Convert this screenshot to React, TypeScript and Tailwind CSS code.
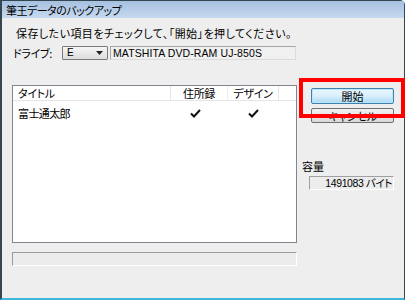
import React from "react";

const Check = () => (
  <svg width="11" height="9" viewBox="0 0 11 9" className="block">
    <path d="M1 4.5 L4 7.5 L10 1" fill="none" stroke="#111" strokeWidth="2" />
  </svg>
);

export default function App() {
  return (
    <div className="relative w-[407px] h-[300px] bg-white font-['Noto_Sans_CJK_JP','Liberation_Sans',sans-serif] text-black [font-feature-settings:'palt'] overflow-hidden">
      <div className="w-[405px] h-[300px] flex flex-col bg-[#eeeeee] border-l-2 border-t border-r border-[#34464f] border-b-2 border-b-[#3db5dc] rounded-tr-[5px]">
        {/* title bar */}
        <div className="h-[17px] shrink-0 flex items-center pl-[4px] bg-gradient-to-b from-[#a6c0e0] to-[#c6d9ef] text-[11px] leading-[12px] tracking-[-0.5px]">
          筆王データのバックアップ
        </div>
        <div className="flex flex-1">
          {/* left column */}
          <div className="pl-[10px] w-[295px] flex flex-col">
            <div className="mt-[9px] ml-[4px] h-[12px] leading-[12px] text-[11px] tracking-[0.45px] whitespace-nowrap">
              保存したい項目をチェックして、「開始」を押してください。
            </div>
            <div className="mt-[7px] h-[14px] flex items-center">
              <div className="w-[50px] pl-[1px] text-[11px] leading-[12px] tracking-[-0.3px]">ドライブ:</div>
              <div className="w-[46px] h-[14px] border border-[#7a7a7a] rounded-[1px] bg-gradient-to-b from-[#f6f6f6] to-[#dcdcdc] flex items-center justify-between pl-[4px] pr-[4px]">
                <span className="text-[10px] leading-[10px] font-['Liberation_Sans',sans-serif]">E</span>
                <svg width="7" height="4" viewBox="0 0 7 4" className="block">
                  <path d="M0 0 H7 L3.5 4 Z" fill="#222" />
                </svg>
              </div>
              <div className="ml-[2px] w-[186px] h-[14px] border border-[#a5a5a5] border-b-[#dcdcdc] border-r-[#dcdcdc] bg-[#f0f0f0] flex items-center pl-[2px]">
                <span className="text-[10.5px] leading-[10px] font-['Liberation_Sans',sans-serif] tracking-[0.1px] whitespace-nowrap">MATSHITA DVD-RAM UJ-850S</span>
              </div>
            </div>
            {/* list */}
            <div className="mt-[25px] h-[158px] border border-[#7f868e] bg-white flex flex-col">
              <div className="h-[15px] flex border-b border-[#e5e5e5] text-[11px] leading-[12px]">
                <div className="w-[158px] pl-[5px] flex items-center border-r border-[#e5e5e5] tracking-[-0.3px]">タイトル</div>
                <div className="w-[57px] flex items-center justify-center border-r border-[#ececec] tracking-[-0.3px]">住所録</div>
                <div className="w-[51px] flex items-center justify-center border-r border-[#e5e5e5] tracking-[-0.3px]">デザイン</div>
                <div className="flex-1" />
              </div>
              <div className="h-[14px] mt-[5px] flex items-center text-[11px] leading-[12px]">
                <div className="w-[158px] pl-[5px] tracking-[-0.6px]">富士通太郎</div>
                <div className="w-[57px] flex justify-center pr-[8px]"><Check /></div>
                <div className="w-[51px] flex justify-center"><Check /></div>
              </div>
            </div>
            {/* progress */}
            <div className="mt-[9px] h-[14px] border border-[#9a9a9a] border-b-white border-r-white bg-[#ececec]" />
          </div>
          {/* right column */}
          <div className="flex-1 flex flex-col">
            <div className="mt-[70px] ml-[14px] w-[83px] h-[16px] rounded-[2px] border border-[#3c7fb1] bg-gradient-to-b from-[#eaf6fd] via-[#d9f0fc] to-[#a7d9f5] flex items-center justify-center text-[11px] leading-[12px] shadow-[inset_0_0_0_1px_#bfe5fa]">
              開始
            </div>
            <div className="mt-[4px] ml-[14px] w-[83px] h-[15px] rounded-[2px] border border-[#707070] bg-gradient-to-b from-[#f2f2f2] to-[#d8d8d8] flex items-center justify-center text-[11px] leading-[12px] tracking-[-0.3px]">
              キャンセル
            </div>
            <div className="mt-[37px] ml-[5px] h-[12px] leading-[12px] text-[11px]">容量</div>
            <div className="mt-[4px] ml-[12px] w-[85px] h-[14px] border border-[#a0a0a0] border-b-white border-r-white bg-[#ececec] flex items-center justify-end pr-[1px]">
              <span className="text-[10.5px] leading-[10px] tracking-[-0.4px] font-['Liberation_Sans','Noto_Sans_CJK_JP',sans-serif] whitespace-nowrap">1491083 バイト</span>
            </div>
          </div>
        </div>
      </div>
      {/* red highlight overlay */}
      <div className="absolute left-[299px] top-[78px] w-[106px] h-[40px] border-[4px] border-[#ff0000]" />
    </div>
  );
}
